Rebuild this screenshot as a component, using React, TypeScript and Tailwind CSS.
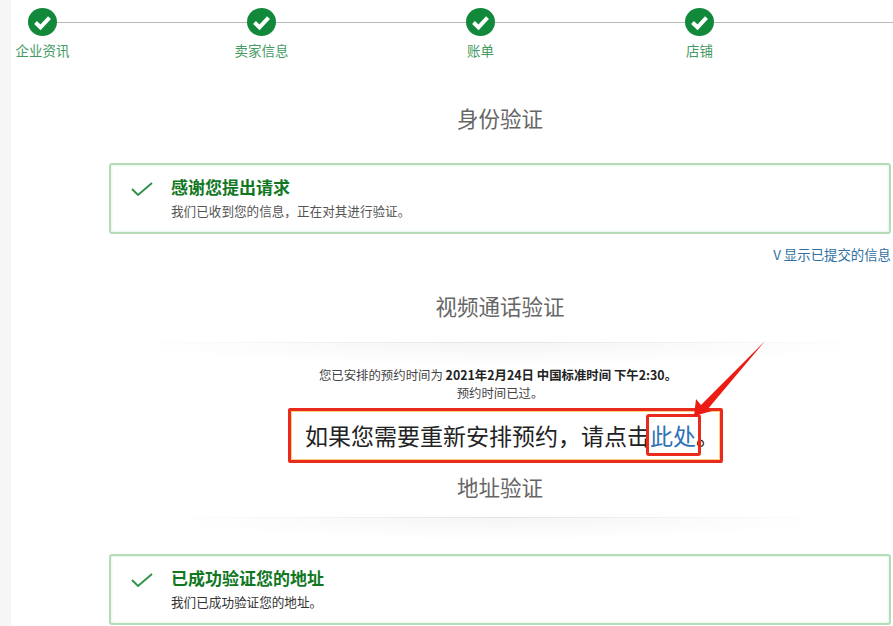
const font = { fontFamily: '"Noto Sans CJK SC", "Liberation Sans", sans-serif' };

const steps = ["企业资讯", "卖家信息", "账单", "店铺"];

function Step({ label }: { label: string }) {
  return (
    <div className="w-[219px] shrink-0">
      <div className="flex items-center pl-[13px]">
        <svg viewBox="0 0 29 28" className="w-[29px] h-[28px] shrink-0">
          <ellipse cx="14.5" cy="14" rx="14.5" ry="14" fill="#12893a" />
          <path d="M7.5 14.5l5 4.8 9-9.6" fill="none" stroke="#fff" strokeWidth="4" />
        </svg>
        <div className="h-[1px] flex-1 mr-[-13px] bg-[#b9b9b9]" />
      </div>
      <div className="w-[55px] mt-[5px] text-center text-[13.5px] leading-[18px] text-[#459a63] whitespace-nowrap">{label}</div>
    </div>
  );
}

function Alert({ title, text, textColor }: { title: string; text: string; textColor: string }) {
  return (
    <div className="h-[71px] shrink-0 flex items-start rounded-[3px] border-2 border-[#b4dcb6] bg-white shadow-[inset_0_0_3px_#d5eed7]">
      <svg viewBox="0 0 22 14" className="w-[22px] h-[14px] mt-[17px] ml-[20px] shrink-0">
        <path d="M1 7l6 6L21 1" fill="none" stroke="#2c8f45" strokeWidth="1.8" />
      </svg>
      <div className="ml-[18px] mt-[11px]">
        <div className="text-[17px] leading-[22px] font-bold text-[#10771f]">{title}</div>
        <div className={`mt-[4px] text-[12.6px] leading-[18px] ${textColor}`}>{text}</div>
      </div>
    </div>
  );
}

function SectionTitle({ children, className }: { children: string; className: string }) {
  return <div className={`text-center text-[21.5px] leading-[32px] text-[#666] ${className}`}>{children}</div>;
}

function Divider({ className }: { className: string }) {
  return (
    <div className={className}>
      <div className="h-[1px] bg-gradient-to-r from-transparent via-[#e4e4e4] to-transparent" />
      <div className="h-[22px] bg-[radial-gradient(ellipse_at_top,#f5f5f5,transparent_70%)]" />
    </div>
  );
}

export default function App() {
  return (
    <div className="relative flex h-[626px] w-[893px] overflow-hidden bg-white" style={font}>
      <div className="w-[11px] shrink-0 bg-[#f6f6f6]" />
      <div className="flex-1 min-w-0 flex flex-col">
        {/* Stepper */}
        <div className="flex pt-[8px] pl-[4px] shrink-0">
          {steps.map((s) => (
            <Step key={s} label={s} />
          ))}
        </div>

        <div className="flex flex-col pl-[98px] pr-[2px]">
          <SectionTitle className="mt-[43px]">身份验证</SectionTitle>
          <div className="mt-[29px] flex flex-col">
            <Alert title="感谢您提出请求" text="我们已收到您的信息，正在对其进行验证。" textColor="text-[#555]" />
          </div>
          <a className="mt-[11px] text-right text-[13.4px] leading-[18px] text-[#2f6f9f]">V 显示已提交的信息</a>

          <SectionTitle className="mt-[27px]">视频通话验证</SectionTitle>
          <Divider className="mt-[20px] mx-[20px] h-[24px]" />
          <div className="text-center text-[12.4px] leading-[18px] text-[#444] pr-[4px]">
            您已安排的预约时间为 <span className="font-bold text-[#222]">2021年2月24日 中国标准时间 下午2:30。</span>
          </div>
          <div className="text-center text-[12.4px] leading-[18px] text-[#444]">预约时间已过。</div>

          <div className="mt-[6px] ml-[179px] w-[435px] h-[55px] shrink-0 rounded-[2px] border-[3px] border-[#e92a1c] bg-white pl-[14px] text-[23px] leading-[48px] text-[#222] whitespace-nowrap shadow-[inset_0_0_0_1px_#f8d27e]">
            如果您需要重新安排预约，请点击<span className="text-[#2f72b8]">此处</span>。
          </div>

          <SectionTitle className="mt-[8px]">地址验证</SectionTitle>
          <Divider className="mt-[14px] mx-[60px] h-[24px]" />
          <div className="mt-[13px] flex flex-col">
            <Alert title="已成功验证您的地址" text="我们已成功验证您的地址。" textColor="text-[#333]" />
          </div>
        </div>
      </div>

      {/* Annotation over the link */}
      <div className="absolute left-[646px] top-[414px] w-[55px] h-[42px] rounded-[3px] border-[3px] border-[#e92a1c]" />
      <svg viewBox="0 0 893 626" className="absolute inset-0 w-[893px] h-[626px] pointer-events-none">
        <path d="M765 341L707 410 712 411 694 416 696 399 701 405Z" fill="#ec1c14" />
      </svg>
    </div>
  );
}
